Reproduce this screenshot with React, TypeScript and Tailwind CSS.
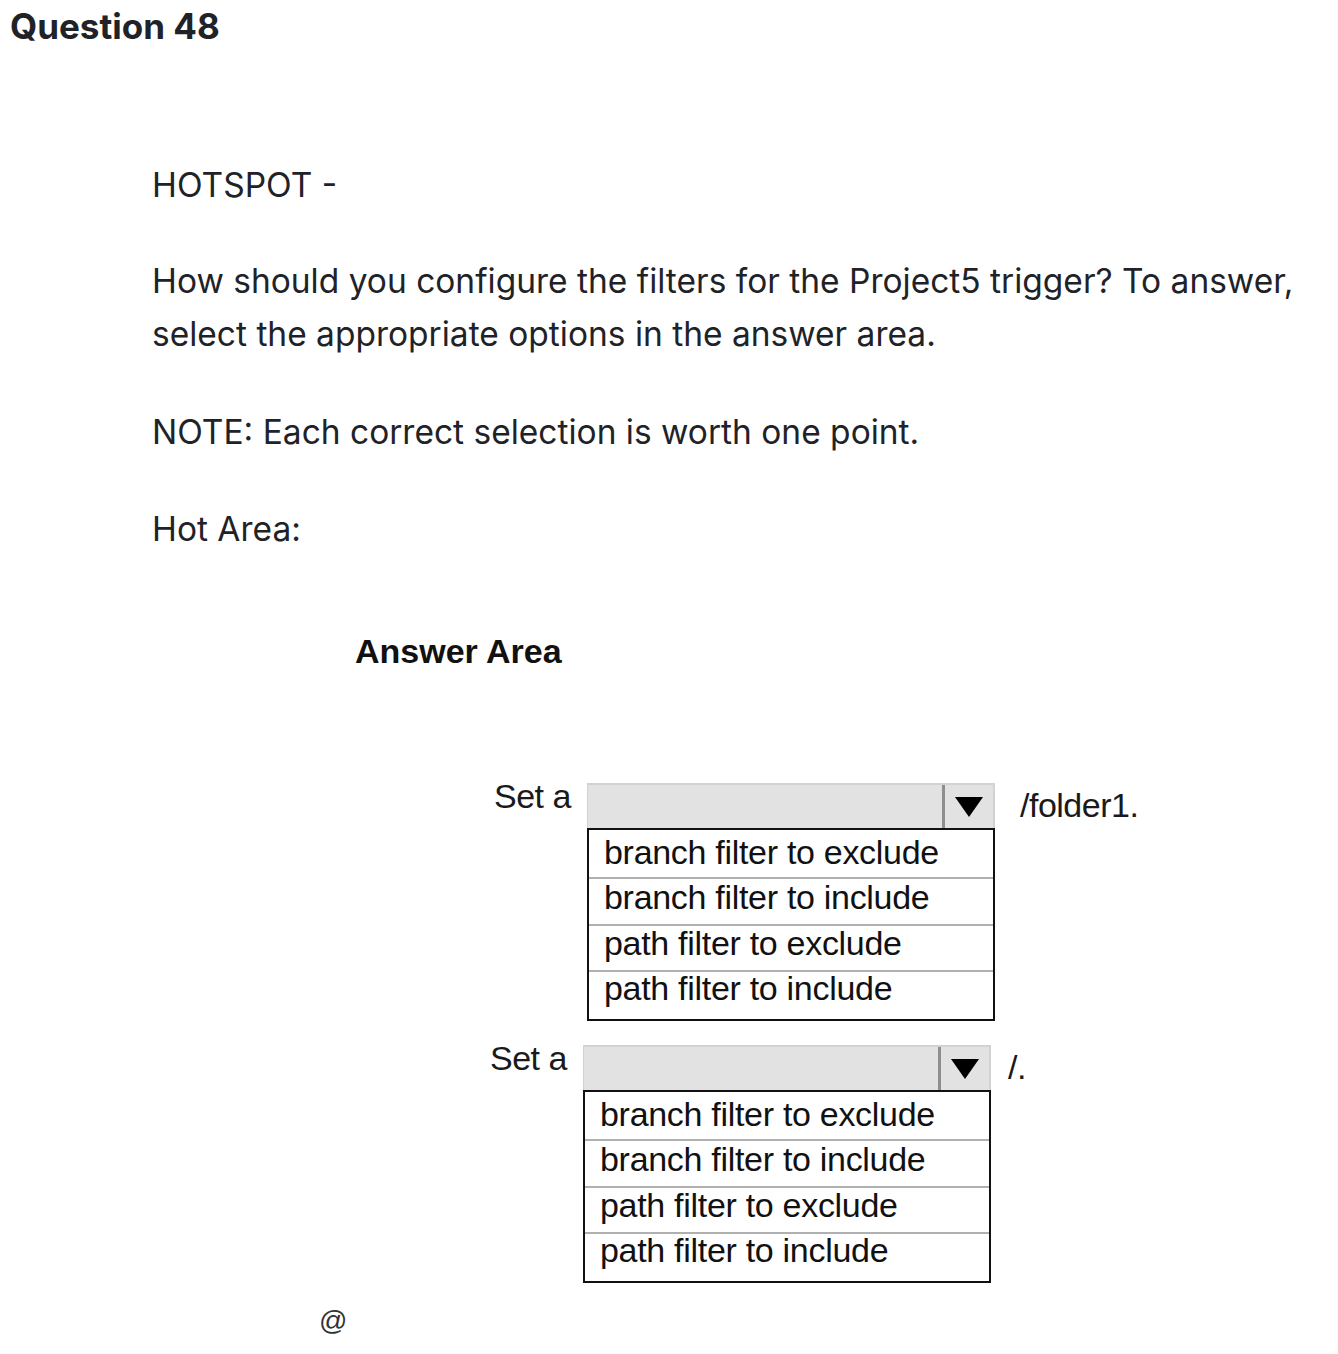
import React from 'react';

const options = [
    { label: 'branch filter to exclude', row: 'h-[49px] pt-[5px] border-b-2 border-[#b0b0b0]' },
    { label: 'branch filter to include', row: 'h-[47px] pt-[1px] border-b-2 border-[#b0b0b0]' },
    { label: 'path filter to exclude', row: 'h-[46px] pt-0 border-b-2 border-[#b0b0b0]' },
    { label: 'path filter to include', row: 'h-[48px] -mt-[1px]' },
];

function Dropdown({ suffix, suffixGap }: { suffix: string; suffixGap: string }) {
    return (
        <div className="flex items-start">
            <div className="w-[93px] -mt-[4px] text-[34px] leading-[34px] tracking-[-0.5px] text-[#1a1a1a]">Set a</div>
            <div className="w-[408px] flex flex-col">
                <div className="h-[45px] flex bg-[#e2e2e2] border-t-2 border-l border-r-2 border-[#d2d2d2]">
                    <div className="flex-1" />
                    <div className="w-[51px] flex items-center justify-center border-l-[3px] border-[#8e8e8e]">
                        <svg width="28" height="20" viewBox="0 0 28 20">
                            <path d="M0 0 H28 L14 20 Z" fill="#000" />
                        </svg>
                    </div>
                </div>
                <div className="border-2 border-[#111] bg-white">
                    {options.map((o) => (
                        <div key={o.label} className={o.row}>
                            <div className="pl-[15px] text-[34px] leading-[34px] tracking-[-0.3px] text-[#111]">{o.label}</div>
                        </div>
                    ))}
                </div>
            </div>
            <div className={`${suffixGap} text-[34px] leading-[34px] pt-[5px] tracking-[-0.5px] text-[#1a1a1a]`}>{suffix}</div>
        </div>
    );
}

function App() {
    return (
        <div className="w-[1338px] h-[1354px] bg-white text-[#1f2328]" style={{ fontFamily: 'Inter, "Noto Sans", sans-serif' }}>
            <h1 className="pl-[10px] pt-[4px] text-[35px] leading-[44px] font-bold">Question 48</h1>

            <div className="pl-[152px] pr-[30px] text-[33.5px] leading-[53px]">
                <p className="mt-[111px]">HOTSPOT -</p>
                <p className="mt-[43px]">How should you configure the filters for the Project5 trigger? To answer, select the appropriate options in the answer area.</p>
                <p className="mt-[45px]">NOTE: Each correct selection is worth one point.</p>
                <p className="mt-[44px]">Hot Area:</p>
            </div>

            <div style={{ fontFamily: '"Liberation Sans", Arial, sans-serif' }}>
                <div className="ml-[355px] mt-[75px] text-[34px] leading-[40px] font-bold text-[#111]">Answer Area</div>

                <div className="ml-[494px] mt-[112px]">
                    <Dropdown suffix="/folder1." suffixGap="ml-[25px]" />
                </div>
                <div className="ml-[490px] mt-[24px]">
                    <Dropdown suffix="/." suffixGap="ml-[17px]" />
                </div>

                <div className="ml-[319px] mt-[22px] text-[28px] leading-[32px] text-[#333]">@</div>
            </div>
        </div>
    );
}

export default App;
